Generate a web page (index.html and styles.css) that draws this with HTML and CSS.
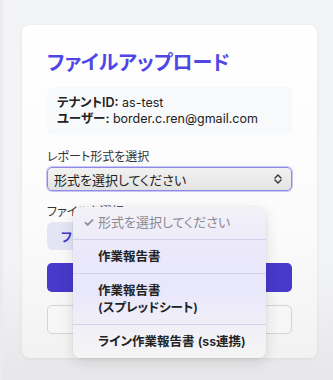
FILE: index.html
```html
<!DOCTYPE html>
<html lang="ja">
<head>
    <meta charset="UTF-8">
    <meta name="viewport" content="width=device-width, initial-scale=1.0">
    <title>ファイルアップロード</title>
    <link rel="stylesheet" href="styles.css">
</head>
<body>
    <div class="page">
        <div class="card">
            <h1 class="title">ファイルアップロード</h1>
            <div class="info">
                <div><b>テナントID:</b> as-test</div>
                <div><b>ユーザー:</b> border.c.ren@gmail.com</div>
            </div>

            <div class="field">
                <label class="label">レポート形式を選択</label>
                <div class="select">
                    <span>形式を選択してください</span>
                    <svg width="10" height="12" viewBox="0 0 10 12">
                        <path d="M2 5 L5 2 L8 5 M2 7 L5 10 L8 7" fill="none" stroke="#333" stroke-width="1.4" stroke-linecap="round" stroke-linejoin="round"/>
                    </svg>
                </div>
            </div>

            <div class="field">
                <label class="label">ファイルを選択</label>
                <div class="file">
                    <span class="file-button">ファイルを選択</span>
                </div>
            </div>

            <button class="button primary">アップロード</button>
            <button class="button secondary">戻る</button>

            <!-- native select menu, open -->
            <div class="menu">
                <div class="menu-item placeholder"><span class="check">✓</span>形式を選択してください</div>
                <div class="menu-item">作業報告書</div>
                <div class="menu-item">作業報告書<br>(スプレッドシート)</div>
                <div class="menu-item">ライン作業報告書 (ss連携)</div>
            </div>
        </div>
    </div>
</body>
</html>
```

FILE: styles.css
```css
body {
    margin: 0;
    padding: 0;
    font-family: Inter, "Noto Sans CJK JP", sans-serif;
    font-feature-settings: "palt";
    color: #1f2937;
}
.page {
    height: 380px;
    box-sizing: border-box;
    padding: 25px 16px 0 19px;
    border-left: 3px solid #ebebed;
    background: linear-gradient(#f3f4f6 0%, #f2f3f5 70%, #e7e7e9 100%);
}
.card {
    position: relative;
    width: 295px;
    box-sizing: border-box;
    padding: 24px 25px 24px 25px;
    background: linear-gradient(#ffffff 0%, #fbfbfb 60%, #f2f2f2 100%);
    border-radius: 8px;
    box-shadow: 0 1px 4px rgba(0,0,0,0.06);
}
.title {
    margin: 0 0 10px 0;
    font-size: 20px;
    line-height: 28px;
    font-weight: 700;
    color: #4f46e5;
}
.info {
    padding: 8px 10px;
    background-color: #f8f9fa;
    border-radius: 6px;
    font-size: 12.5px;
    line-height: 16px;
    color: #222;
}
.info b {
    font-weight: 600;
}
.field {
    margin-top: 14px;
}
.field + .field {
    margin-top: 13px;
}
.label {
    display: block;
    font-size: 12px;
    line-height: 16px;
    color: #333;
    margin-bottom: 2px;
}
.select {
    display: flex;
    align-items: center;
    justify-content: space-between;
    height: 22px;
    padding: 0 8px 0 6px;
    border: 1px solid #8f8ae6;
    border-radius: 5px;
    box-shadow: 0 0 0 1px #c9c6f5;
    background: linear-gradient(#f2f2f2, #e3e3e3);
    font-size: 13px;
    color: #222;
}
.file {
    margin-top: 2px;
    height: 28px;
    display: flex;
}
.file-button {
    display: flex;
    align-items: center;
    padding: 0 14px;
    background-color: #e3e5f5;
    border-radius: 6px;
    font-size: 12.5px;
    font-weight: 700;
    color: #4338ca;
}
.button {
    display: block;
    width: 100%;
    height: 29px;
    border-radius: 5px;
    font-family: inherit;
    font-size: 13px;
    font-weight: 600;
    cursor: pointer;
}
.button.primary {
    margin-top: 13px;
    border: none;
    background-color: #4739c9;
    color: #fff;
}
.button.secondary {
    margin-top: 13px;
    border: 1px solid #d4d4d8;
    background-color: #f6f6f6;
    color: #333;
}
.menu {
    position: absolute;
    left: 51px;
    top: 182px;
    width: 193px;
    border-radius: 8px;
    overflow: hidden;
    background: linear-gradient(#f3f2f8 0%, #eae8fa 30%, #e9e7fb 55%, #efeef8 75%, #f5f5f5 100%);
    box-shadow: 0 4px 14px rgba(0,0,0,0.12), 0 0 0 0.5px rgba(0,0,0,0.06);
}
.menu-item {
    padding: 8px 10px 8px 25px;
    font-size: 12.5px;
    line-height: 17px;
    font-weight: 600;
    color: #222;
    border-top: 1px solid #d3d1ec;
}
.menu-item:first-child {
    border-top: none;
}
.menu-item.placeholder {
    padding: 7px 10px 8px 10px;
    font-size: 13px;
    font-weight: 400;
    color: #8a8a8f;
}
.check {
    display: inline-block;
    width: 15px;
    font-weight: 600;
}
```
